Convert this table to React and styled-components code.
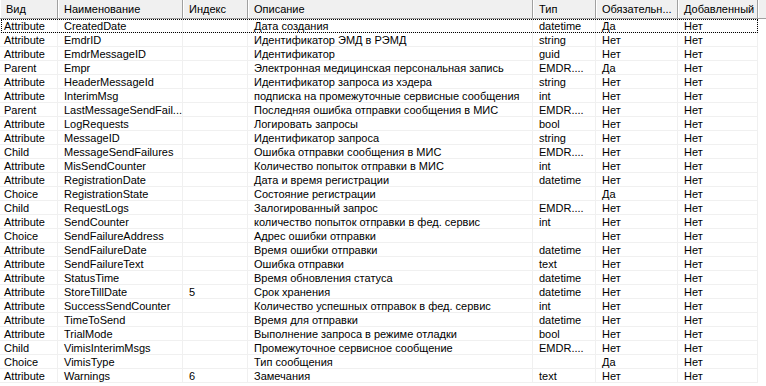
import React from "react";
import styled, { createGlobalStyle } from "styled-components";

const Global = createGlobalStyle`
  html, body { margin: 0; padding: 0; background: #ffffff; }
  body { font-family: "Liberation Sans", Arial, sans-serif; font-size: 11px; color: #000; }
`;

const COLS = "58px 125px 65px 285px 63px 82px 80px 1fr";

const List = styled.div`
  width: 766px;
  height: 386px;
  overflow: hidden;
  background: #fff;
  display: flex;
  flex-direction: column;
`;

const Header = styled.div`
  display: grid;
  grid-template-columns: ${COLS};
  height: 19px;
  background: #f0f0f0;
`;

const HeadCell = styled.div`
  box-sizing: border-box;
  height: 19px;
  padding: 0 0 0 6px;
  line-height: 18px;
  white-space: nowrap;
  overflow: hidden;
  border-right: ${(p) => (p.$filler ? "none" : "1px solid #a0a0a0")};
  border-bottom: 1px solid #a0a0a0;
  box-shadow: inset 1px 0 0 #ffffff;
`;

const Row = styled.div`
  position: relative;
  display: grid;
  grid-template-columns: ${COLS};
  height: 14px;
`;

const Cell = styled.div`
  box-sizing: border-box;
  height: 14px;
  line-height: 14px;
  padding-left: ${(p) => (p.$first ? "4px" : "6px")};
  white-space: nowrap;
  overflow: hidden;
  border-right: ${(p) => (p.$filler ? "none" : "1px solid #f0f0f0")};
  border-bottom: ${(p) => (p.$filler ? "none" : "1px solid #f0f0f0")};
`;

const Focus = styled.div`
  position: absolute;
  left: 1px;
  top: 0;
  width: 757px;
  height: 14px;
  box-sizing: border-box;
  border: 1px dotted #000;
  pointer-events: none;
`;

const headers = ["Вид", "Наименование", "Индекс", "Описание", "Тип", "Обязательн...", "Добавленный"];

const rows = [
  ["Attribute", "CreatedDate", "", "Дата создания", "datetime", "Да", "Нет"],
  ["Attribute", "EmdrID", "", "Идентификатор ЭМД в РЭМД", "string", "Нет", "Нет"],
  ["Attribute", "EmdrMessageID", "", "Идентификатор", "guid", "Нет", "Нет"],
  ["Parent", "Empr", "", "Электронная медицинская персональная запись", "EMDR....", "Да", "Нет"],
  ["Attribute", "HeaderMessageId", "", "Идентификатор запроса из хэдера", "string", "Нет", "Нет"],
  ["Attribute", "InterimMsg", "", "подписка на промежуточные сервисные сообщения", "int", "Нет", "Нет"],
  ["Parent", "LastMessageSendFail...", "", "Последняя ошибка отправки сообщения в МИС", "EMDR....", "Нет", "Нет"],
  ["Attribute", "LogRequests", "", "Логировать запросы", "bool", "Нет", "Нет"],
  ["Attribute", "MessageID", "", "Идентификатор запроса", "string", "Нет", "Нет"],
  ["Child", "MessageSendFailures", "", "Ошибка отправки сообщения в МИС", "EMDR....", "Нет", "Нет"],
  ["Attribute", "MisSendCounter", "", "Количество попыток отправки в МИС", "int", "Нет", "Нет"],
  ["Attribute", "RegistrationDate", "", "Дата и время регистрации", "datetime", "Нет", "Нет"],
  ["Choice", "RegistrationState", "", "Состояние регистрации", "", "Да", "Нет"],
  ["Child", "RequestLogs", "", "Залогированный запрос", "EMDR....", "Нет", "Нет"],
  ["Attribute", "SendCounter", "", "количество попыток отправки в фед. сервис", "int", "Нет", "Нет"],
  ["Choice", "SendFailureAddress", "", "Адрес ошибки отправки", "", "Нет", "Нет"],
  ["Attribute", "SendFailureDate", "", "Время ошибки отправки", "datetime", "Нет", "Нет"],
  ["Attribute", "SendFailureText", "", "Ошибка отправки", "text", "Нет", "Нет"],
  ["Attribute", "StatusTime", "", "Время обновления статуса", "datetime", "Нет", "Нет"],
  ["Attribute", "StoreTillDate", "5", "Срок хранения", "datetime", "Нет", "Нет"],
  ["Attribute", "SuccessSendCounter", "", "Количество успешных отправок в фед. сервис", "int", "Нет", "Нет"],
  ["Attribute", "TimeToSend", "", "Время для отправки", "datetime", "Нет", "Нет"],
  ["Attribute", "TrialMode", "", "Выполнение запроса в режиме отладки", "bool", "Нет", "Нет"],
  ["Child", "VimisInterimMsgs", "", "Промежуточное сервисное сообщение", "EMDR....", "Нет", "Нет"],
  ["Choice", "VimisType", "", "Тип сообщения", "", "Да", "Нет"],
  ["Attribute", "Warnings", "6", "Замечания", "text", "Нет", "Нет"],
];

export default function App() {
  return (
    <>
      <Global />
      <List>
        <Header>
          {headers.map((h) => (
            <HeadCell key={h}>{h}</HeadCell>
          ))}
          <HeadCell $filler />
        </Header>
        {rows.map((r, i) => (
          <Row key={r[1]}>
            {r.map((c, j) => (
              <Cell key={j} $first={j === 0}>
                {c}
              </Cell>
            ))}
            <Cell $filler />
            {i === 0 && <Focus />}
          </Row>
        ))}
      </List>
    </>
  );
}
